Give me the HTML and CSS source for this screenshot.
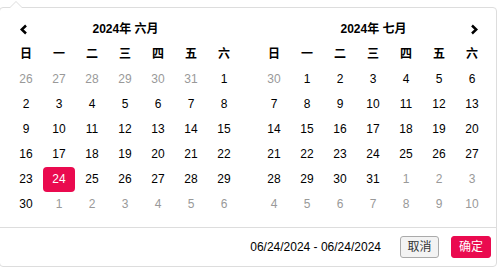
FILE: index.html
```html
<!DOCTYPE html>
<html lang="zh">
<head>
<meta charset="utf-8">
<link rel="stylesheet" href="styles.css">
</head>
<body>
<div class="picker">
  <div class="cals">
    <div class="cal">
      <div class="nav prev"><svg width="9" height="11" viewBox="0 0 9 11"><polyline points="7,1.5 2.8,5.5 7,9.5" fill="none" stroke="#000" stroke-width="2.5"/></svg></div>
      <div class="title">2024年 六月</div>
      <div class="nav"></div>
      <div class="wd">日</div><div class="wd">一</div><div class="wd">二</div><div class="wd">三</div><div class="wd">四</div><div class="wd">五</div><div class="wd">六</div>
      <div class="d off">26</div><div class="d off">27</div><div class="d off">28</div><div class="d off">29</div><div class="d off">30</div><div class="d off">31</div><div class="d">1</div>
      <div class="d">2</div><div class="d">3</div><div class="d">4</div><div class="d">5</div><div class="d">6</div><div class="d">7</div><div class="d">8</div>
      <div class="d">9</div><div class="d">10</div><div class="d">11</div><div class="d">12</div><div class="d">13</div><div class="d">14</div><div class="d">15</div>
      <div class="d">16</div><div class="d">17</div><div class="d">18</div><div class="d">19</div><div class="d">20</div><div class="d">21</div><div class="d">22</div>
      <div class="d">23</div><div class="d active">24</div><div class="d">25</div><div class="d">26</div><div class="d">27</div><div class="d">28</div><div class="d">29</div>
      <div class="d">30</div><div class="d off">1</div><div class="d off">2</div><div class="d off">3</div><div class="d off">4</div><div class="d off">5</div><div class="d off">6</div>
    </div>
    <div class="cal">
      <div class="nav"></div>
      <div class="title">2024年 七月</div>
      <div class="nav next"><svg width="9" height="11" viewBox="0 0 9 11"><polyline points="2,1.5 6.2,5.5 2,9.5" fill="none" stroke="#000" stroke-width="2.5"/></svg></div>
      <div class="wd">日</div><div class="wd">一</div><div class="wd">二</div><div class="wd">三</div><div class="wd">四</div><div class="wd">五</div><div class="wd">六</div>
      <div class="d off">30</div><div class="d">1</div><div class="d">2</div><div class="d">3</div><div class="d">4</div><div class="d">5</div><div class="d">6</div>
      <div class="d">7</div><div class="d">8</div><div class="d">9</div><div class="d">10</div><div class="d">11</div><div class="d">12</div><div class="d">13</div>
      <div class="d">14</div><div class="d">15</div><div class="d">16</div><div class="d">17</div><div class="d">18</div><div class="d">19</div><div class="d">20</div>
      <div class="d">21</div><div class="d">22</div><div class="d">23</div><div class="d">24</div><div class="d">25</div><div class="d">26</div><div class="d">27</div>
      <div class="d">28</div><div class="d">29</div><div class="d">30</div><div class="d">31</div><div class="d off">1</div><div class="d off">2</div><div class="d off">3</div>
      <div class="d off">4</div><div class="d off">5</div><div class="d off">6</div><div class="d off">7</div><div class="d off">8</div><div class="d off">9</div><div class="d off">10</div>
    </div>
  </div>
  <div class="footer">
    <span class="range">06/24/2024 - 06/24/2024</span>
    <button class="btn cancel">取消</button>
    <button class="btn ok">确定</button>
  </div>
</div>
</body>
</html>
```

FILE: styles.css
```css
html, body {
  margin: 0;
  padding: 0;
  background: #fff;
}
body {
  font-family: "Liberation Sans", Arial, "Noto Sans CJK SC", sans-serif;
  font-size: 12px;
  color: #000;
  overflow: hidden;
}
.picker {
  position: relative;
  box-sizing: border-box;
  width: 498px;
  margin: 7px 0 0 -1px;
  border: 1px solid #ddd;
  border-radius: 4px;
  background: #fff;
}
.picker::before {
  content: "";
  position: absolute;
  top: -7px;
  left: 9px;
  border-left: 7px solid transparent;
  border-right: 7px solid transparent;
  border-bottom: 7px solid #ddd;
}
.picker::after {
  content: "";
  position: absolute;
  top: -6px;
  left: 10px;
  border-left: 6px solid transparent;
  border-right: 6px solid transparent;
  border-bottom: 6px solid #fff;
}
.cals {
  display: flex;
  gap: 17px;
  padding: 9px 7px 10px 10px;
}
.cal {
  display: grid;
  grid-template-columns: repeat(7, 33px);
  grid-auto-rows: 25px;
}
.nav {
  display: flex;
  align-items: center;
  justify-content: center;
}
.nav svg { display: block; }
.prev { justify-content: flex-start; padding-left: 9px; }
.next { justify-content: flex-end; padding-right: 10px; }
.title {
  grid-column: span 5;
  text-align: center;
  line-height: 25px;
  font-weight: bold;
}
.wd {
  width: 32px;
  text-align: center;
  line-height: 25px;
  font-weight: bold;
}
.d {
  width: 32px;
  text-align: center;
  line-height: 25px;
  border-radius: 4px;
}
.d.off { color: #999; }
.d.active {
  background: #ea0a4f;
  color: #fff;
}
.footer {
  display: flex;
  justify-content: flex-end;
  align-items: center;
  border-top: 1px solid #ddd;
  padding: 8px 5px 8px 8px;
}
.range {
  margin-right: 19px;
  line-height: 22px;
}
.btn {
  box-sizing: border-box;
  height: 22px;
  padding: 0;
  font-family: "Liberation Sans", Arial, "Noto Sans CJK SC", sans-serif;
  font-size: 12px;
  line-height: 20px;
  border-radius: 3px;
  cursor: pointer;
}
.cancel {
  width: 39px;
  background: #f3f3f3;
  border: 1px solid #aaa;
  color: #333;
}
.ok {
  width: 40px;
  margin-left: 12px;
  background: #ea0a4f;
  border: 1px solid #ea0a4f;
  color: #fff;
}
```
